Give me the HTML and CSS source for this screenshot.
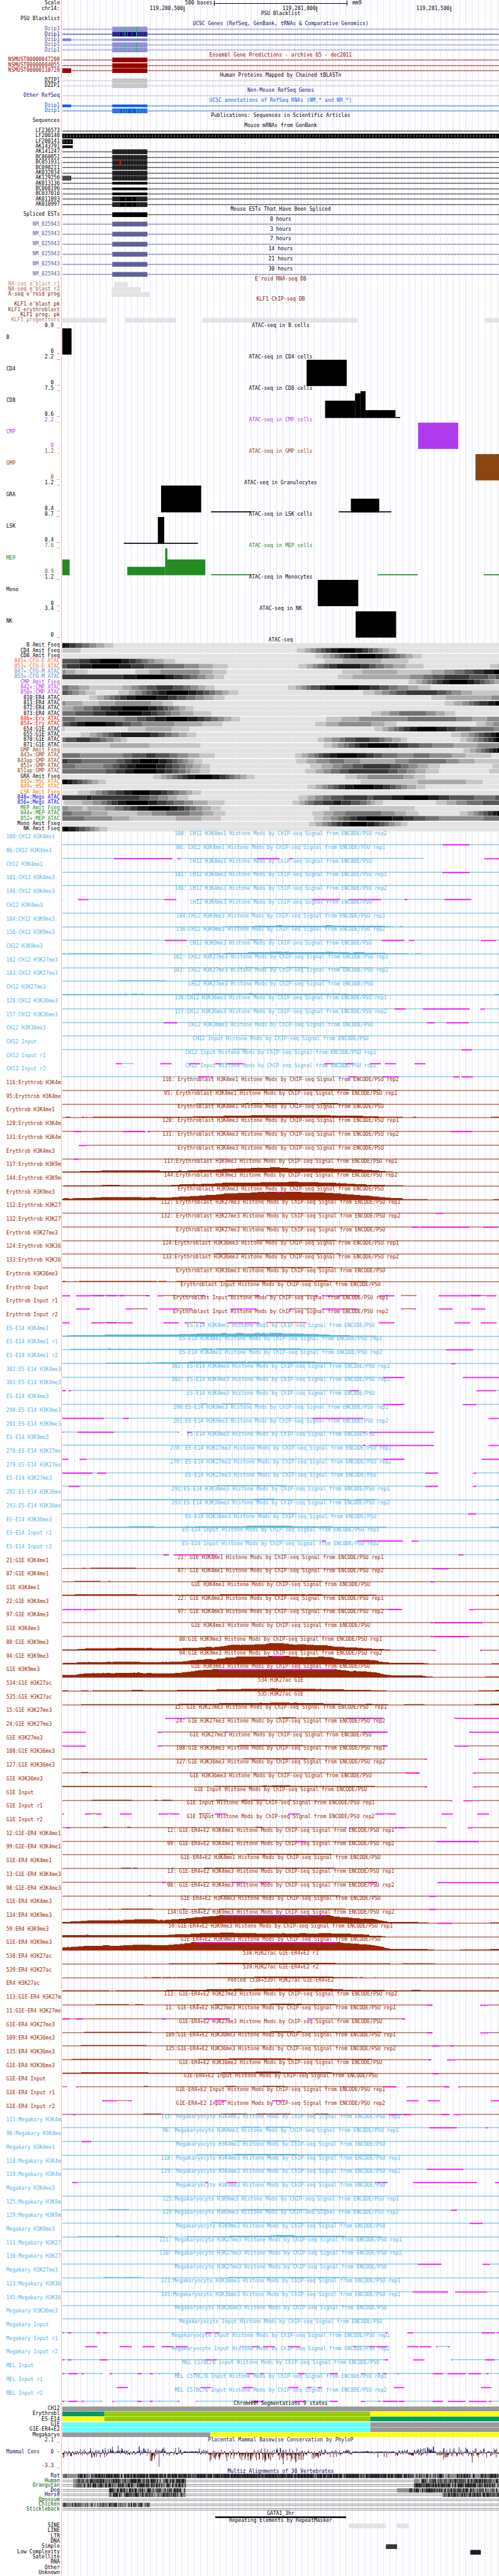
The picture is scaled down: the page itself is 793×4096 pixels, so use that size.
FILE: index.html
```html
<!DOCTYPE html>
<html lang="en">
<head>
<meta charset="utf-8">
<title>chr14 - mm9 genome browser tracks</title>
<link rel="stylesheet" href="styles.css">
</head>
<body>
<main class="browser" id="browser">
  <div class="backdrop" id="backdrop"></div>
  <header class="group">
    <div class="row scale">
      <div class="label">Scale</div>
      <div class="scale-data">
        <span class="scale-size">500 bases</span>
        <span class="scale-bar"></span>
        <span class="scale-db">mm9</span>
      </div>
    </div>
    <div class="row item">
      <div class="label">chr14:</div>
      <div class="ticks">
        <span class="tick">119,280,500</span>
        <span class="tick">119,281,000</span>
        <span class="tick">119,281,500</span>
      </div>
    </div>
  </header>
</main>
<script src="tracks.js"></script>
</body>
</html>
```
FILE: styles.css
```css
* { box-sizing: border-box; }

body {
  margin: 0;
  background: #fff;
  color: #000;
  font-family: "DejaVu Sans Mono", "Liberation Mono", monospace;
  font-size: 8px;
  line-height: 8px;
}

.browser {
  position: relative;
  display: flex;
  flex-direction: column;
  min-height: 100vh;
  overflow: hidden;
}

.group { display: contents; }

/* Guide lines behind every track */
.backdrop {
  position: absolute;
  inset: 0 0 0 97px;
  border-left: 1px solid #ffb4b4;
  padding-left: 1px;
}
.backdrop svg { display: block; width: 100%; height: 100%; }

/* Rows share the window height in proportion to their kind */
.row {
  position: relative;
  display: grid;
  grid-template-columns: 99px minmax(0, 1fr);
  grid-template-rows: minmax(0, 1fr);
}
.scale { flex: 37 0 0; min-height: 10px; }
.title { flex: 27 0 0; min-height: 7px; }
.align { flex: 27 0 0; min-height: 7px; }
.item { flex: 30 0 0; min-height: 8px; }
.signal { flex: 78 0 0; min-height: 21px; }
.wiggle { flex: 180 0 0; min-height: 50px; }
.bar { flex: 12 0 0; min-height: 3px; }

.label {
  display: flex;
  align-items: center;
  justify-content: flex-end;
  padding: 0 4px 0 10px;
  white-space: pre;
}
.signal .label {
  align-items: flex-start;
  justify-content: flex-start;
  padding: 5px 0 0 10px;
}
.wiggle .label {
  display: grid;
  grid-template-rows: 27fr 43fr 27fr 53fr 27fr 3fr;
  justify-content: stretch;
}
.limit { display: flex; align-items: center; justify-content: flex-end; }
.upper { grid-row: 1; }
.name { grid-row: 3; display: flex; align-items: center; justify-content: space-between; }
.lower { grid-row: 5; }

.data {
  display: grid;
  grid-template: minmax(0, 1fr) / minmax(0, 1fr);
  grid-column: 2;
}
.plot, .caption { grid-area: 1 / 1; }
.plot { display: block; width: 100%; height: 100%; overflow: visible; }
.caption {
  position: relative;
  align-self: start;
  justify-self: center;
  margin: 0;
  font-size: 8px;
  font-weight: 400;
  white-space: pre;
}
.title .caption { align-self: center; }

/* Ruler */
.scale-data {
  display: grid;
  grid-template-columns: 477fr 418fr 476fr;
  align-items: center;
}
.scale-size { text-align: right; padding-right: 3px; }
.scale-bar {
  height: 8px;
  border: solid #000;
  border-width: 0 1px;
  background: linear-gradient(#000, #000) center / 100% 1px no-repeat;
}
.scale-db { padding-left: 8px; }
.ticks {
  display: grid;
  grid-template-columns: 383fr 417fr 420fr 151fr;
}
.tick {
  display: flex;
  align-items: center;
  justify-content: flex-end;
  border-right: 1px solid #000;
  padding-right: 1px;
}
```
FILE: tracks.js
```js
(function () {
  var X0 = 195, X1 = 1566, W = X1 - X0;
  var LABEL_CHARS = 18;
  var browser = document.getElementById('browser');
  var group = browser;

  var BLUE = '#56b4e6', BROWN = '#992600', NAVY = '#0c0c78';
  var SHADES = ['#e3e3e3', '#c6c6c6', '#aaaaaa', '#8d8d8d', '#717171', '#555555', '#383838', '#1c1c1c', '#000000'];

  function rect(x1, x2, y, h, fill) {
    return '<rect x="' + x1 + '" y="' + y + '" width="' + (x2 - x1) + '" height="' + h + '" fill="' + fill + '"/>';
  }
  function plot(h, body) {
    return '<svg class="plot" aria-hidden="true" viewBox="' + X0 + ' 0 ' + W + ' ' + h + '" preserveAspectRatio="none">' + body + '</svg>';
  }
  function nums(s) { return s ? s.split(' ').map(Number) : []; }

  function section() {
    group = document.createElement('section');
    group.className = 'group';
    browser.appendChild(group);
  }
  function addRow(kind, color, label, data) {
    var row = document.createElement('div');
    row.className = 'row ' + kind;
    if (color) row.style.color = color;
    row.innerHTML = (label ? '<div class="label">' + label + '</div>' : '') + '<div class="data">' + data + '</div>';
    group.appendChild(row);
  }
  function caption(text) { return '<h2 class="caption">' + text.replace(/&/g, '&amp;') + '</h2>'; }
  function title(text, color) { section(); addRow('title', color, '', caption(text)); }
  function item(label, color, body) { addRow('item', color, label, body ? plot(30, body) : ''); }

  /* Intron line with direction arrows */
  function chevrons(x1, x2, dir, color, width) {
    var d = '';
    for (var x = x1 + 4; x < x2 - 4; x += 9.89) {
      var a = dir < 0 ? x + 4 : x, b = dir < 0 ? x : x + 4;
      d += 'M' + a.toFixed(1) + ' 9L' + b.toFixed(1) + ' 15.5L' + a.toFixed(1) + ' 22';
    }
    return '<path d="' + d + '" fill="none" stroke="' + color + '" stroke-width="' + width + '"/>';
  }
  function intron(color, light) {
    return rect(X0, X1, 14, 3, color) + chevrons(X0, X1, -1, light || color, light ? 1.6 : 1.3);
  }
  function stripes(x1, x2, base, light, sparse) {
    var s = rect(x1, x2, 2, 27, base), i = 0;
    for (var x = x1 + 2; x < x2 - 2; x += 4.945, i++) {
      if (sparse && x > 378 && x < 426 && i % sparse) continue;
      s += rect(x, x + 1.8, 2, 27, light);
    }
    return s;
  }
  function stops() { return rect(390.5, 393, 2, 27, '#00e61e') + rect(427, 430, 2, 27, '#00e61e'); }

  /* Backdrop guide lines */
  var lines = '';
  for (var k = 0; k < 69; k++) lines += rect(213 + k * 19.81, 214.65 + k * 19.81, 0, 10, '#dcdcfa');
  document.getElementById('backdrop').innerHTML = plot(10, lines);

  title('PSU Blacklist');
  item('PSU Blacklist', '', '');

  var VIOLET = '#8282d2', PALE = '#aaaae1', SOFT = '#a5a5d2';
  title('UCSC Genes (RefSeq, GenBank, tRNAs & Comparative Genomics)', NAVY);
  item('Dzip1', '#505096', intron(VIOLET, SOFT) + stripes(352, 462, VIOLET, PALE) + stops());
  item('Dzip1', NAVY, intron(NAVY, '#7878b4') + stripes(352, 462, NAVY, '#5f5fa5', 3) + stops());
  item('Dzip1', '#505096', intron(VIOLET, SOFT) + rect(195, 223, 8, 15, VIOLET) + rect(352, 462, 8, 15, VIOLET));
  item('Dzip1', '#505096', intron(VIOLET, SOFT) + stripes(352, 462, VIOLET, PALE) + stops());
  item('Dzip1', '#505096', intron(VIOLET, SOFT) + stripes(352, 462, VIOLET, PALE) + stops());

  var RED = '#960000', block = function (c) { return rect(352, 462, 2, 27, c); };
  title('Ensembl Gene Predictions - archive 65 - dec2011', RED);
  item('NSMUST00000047208', RED, intron(RED, '#c88282') + block(RED));
  item('NSMUST00000004055', RED, intron(RED, '#c88282') + block(RED));
  item('NSMUST00000110728', RED, intron(RED, '#c88282') + rect(195, 223, 2, 27, RED) + block(RED));

  title('Human Proteins Mapped by Chained tBLASTn');
  item('DZIP1', '', intron('#c6c6c6', '#c6c6c6') + block('#c6c6c6'));
  item('DZIP1', '', intron('#c6c6c6', '#c6c6c6') + block('#c6c6c6'));

  title('Non-Mouse RefSeq Genes', NAVY);
  item('Other RefSeq', NAVY, rect(X0, X1, 14, 3, '#aaaad2'));

  var AZURE = '#0c5ceb';
  title('UCSC annotations of RefSeq RNAs (NM_* and NR_*)', AZURE);
  item('Dzip1', AZURE, intron(AZURE, '#8cb4f5') + rect(195, 223, 8, 15, AZURE) + rect(352, 462, 8, 15, AZURE));
  item('Dzip1', AZURE, intron(AZURE, '#8cb4f5') + stripes(352, 462, AZURE, '#6496f5', 3) + stops());

  title('Publications: Sequences in Scientific Articles');
  item('Sequences', '', '');

  var GREY = '#969696', black = intron('#000', GREY);
  title('Mouse mRNAs from GenBank');
  item('LF236573', '', black);
  item('LF200140', '', rect(X0, X1, 2, 27, '#000') + chevrons(X0, X1, -1, '#fff', 1.6));
  item('LF200141', '', rect(195, 228, 2, 27, '#000') + chevrons(194, 230, 1, '#fff', 1.6));
  item('AK143791', '', rect(195, 228, 8, 15, '#000'));
  ['AK141247', 'BC060051', 'BC051931', 'BC098211', 'AK032834', 'AK129256'].forEach(function (id) {
    var s = black + stripes(352, 462, '#000', '#5a5a5a');
    if (id === 'BC051931') s += rect(375, 380, 2, 27, '#e60000');
    if (id === 'AK129256') s += stripes(195, 223, '#323232', '#6e6e6e');
    item(id, '', s);
  });
  ['AK013136', 'BC060196', 'BC037016'].forEach(function (id) {
    item(id, '', black + rect(352, 462, 8, 15, '#000'));
  });
  item('AK011093', '', black + stripes(352, 462, '#000', '#5a5a5a', 4));
  item('AK010997', '', black + stripes(352, 462, '#000', '#5a5a5a', 4));

  title('Mouse ESTs That Have Been Spliced');
  item('Spliced ESTs', '', rect(X0, X1, 14, 3, '#000') + block('#000'));

  [0, 3, 7, 14, 21, 30].forEach(function (h) {
    title(h + ' hours', '#000');
    item('NM_025943', '#606098', intron('#606098', '#9696be') + block('#606098'));
  });

  function boxes(s) {
    var n = nums(s), out = '';
    for (var i = 0; i < n.length; i += 2) out += rect(n[i], n[i + 1], 2, 27, '#e3e3e3');
    return out;
  }
  title("E'roid RNA-seq DB", '#781900');
  item("NA-seq e'blast r1", '#be8c7d', boxes('358 401'));
  item("NA-seq e'blast r2", '#a05a46', boxes('350 442'));
  item("A-seq e'roid prog", '#781900', boxes('350 469'));
  title('KLF1 ChIP-seq DB', '#781900');
  item("KLF1 e'blast pk", '#781900', '');
  item('KLF1 erythroblast', '#8c3723', '');
  item('KLF1 prog. pk', '#781900', '');
  item('KLF1 progenitors', '#b47864', boxes('195 335 392 553 635 1121 1520 1566'));

  /* Wiggle tracks: name, colour, caption, upper, lower, "x1 x2 top bottom" quadruples */
  function limits(name, zero, up, low, upColor, lowColor) {
    return '<span class="limit upper"' + (upColor ? ' style="color:' + upColor + '"' : '') + '>' + up + ' _</span>' +
      '<span class="name"><span>' + name + '</span><span>' + zero + '</span></span>' +
      '<span class="limit lower"' + (lowColor ? ' style="color:' + lowColor + '"' : '') + '>' + low + ' _</span>';
  }
  [
    ['B', '#000', 'B cells', '0.9', '0', '195 224 29 179'],
    ['CD4', '#000', 'CD4 cells', '2.2', '0', '962 1088 29 179'],
    ['CD8', '#000', 'CD8 cells', '7.5', '0.6', '1020 1114 83 182 1114 1131 41 182 1131 1147 29 182 1147 1241 137 182 1241 1256 176 182'],
    ['CMP', '#b03aee', 'CMP cells', '2.2', '0', '1312 1438 29 179'],
    ['GMP', '#8b4513', 'GMP cells', '1.2', '0', '1492 1566 29 179'],
    ['GRA', '#000', 'Granulocytes', '1.2', '0.4', '505 631 29 182 662 789 176 182 1063 1228 176 182 1101 1190 104 182'],
    ['LSK', '#000', 'LSK cells', '0.7', '0.4', '388 621 176 182 495 515 29 182'],
    ['MEP', '#228b22', 'MEP cells', '7.6', '0.9', '195 218 92 182 399 518 134 182 518 525 29 182 525 644 92 182 662 789 176 182 1185 1311 176 182 1518 1566 176 182'],
    ['Mono', '#000', 'Monocytes', '1.2', '0', '997 1124 29 179'],
    ['NK', '#000', 'NK', '3.4', '0', '1116 1243 29 179']
  ].forEach(function (t) {
    var n = nums(t[5]), s = '';
    for (var i = 0; i < n.length; i += 4) s += rect(n[i], n[i + 1], n[i + 2], n[i + 3] - n[i + 2], t[1]);
    section();
    addRow('wiggle', t[1], limits(t[0], '', t[3], t[4]), plot(180, s) + caption('ATAC-seq in ' + t[2]));
  });

  /* Density rows: shade, end, shade, end ... */
  var TOMATO = '#ff6347', STEEL = '#4a90d0', PURPLE = '#b03aee', UMBER = '#8b4513', ORANGE = '#ee7600', GREEN = '#228b22';
  title('ATAC-seq');
  [
    ['B Amit Fseq', '', '8 203 7 218 6 238 5 259 4 281 3 302 2 327 1 355 0'],
    ['CD4 Amit Fseq', '', '1 253 0 931 1 956 2 974 3 990 4 1006 5 1020 6 1037 7 1060 8 1116 7 1139 6 1156 5 1172 4 1187 3 1202 2 1221 1 1244 0'],
    ['CD8 Amit Fseq', '', '0 989 1 1013 2 1035 3 1050 4 1065 5 1080 6 1098 7 1121 8 1180 7 1202 6 1222 5 1240 4 1256 3 1274 2 1296 1 1324 0'],
    ['845+:CFU-E ATAC', TOMATO, '5 248 6 282 7 312 8 381 7 405 6 426 5 444 4 464 3 485 2 513 1 550 0 1018 1 1076 2 1197 1 1282 0'],
    ['853+:CFU-E ATAC', TOMATO, '5 208 6 249 7 287 8 373 7 411 6 452 5 513 4 579 3 624 2 668 1 716 0 936 1 961 2 980 3 997 4 1015 5 1032 6 1055 7 1132 6 1160 5 1180 4 1205 3 1235 2 1274 1 1330 0 1538 1 1563 2'],
    ['847+:CFU-M ATAC', STEEL, '3 205 2 236 1 274 0 424 1 467 2 503 3 627 2 667 1 711 0 1073 1 1136 2 1246 1 1353 2 1393 3 1426 4 1457 5 1487 6 1517 7 1550 8'],
    ['855+:CFU-M ATAC', STEEL, '6 386 7 427 8 517 7 546 6 574 5 596 4 620 3 645 2 672 1 703 0 1060 1 1106 2 1287 3 1329 4 1357 5 1393 6 1474 5 1533 4 1555 5'],
    ['CMP Amit Fseq', PURPLE, '0 1282 1 1306 2 1325 3 1341 4 1356 5 1370 6 1388 7 1410 8 1467 7 1490 6 1507 5 1522 4 1538 3 1553 2'],
    ['842+:CMP ATAC', PURPLE, '4 215 3 248 2 281 1 383 2 411 3 436 4 459 5 490 6 543 5 576 4 599 3 622 2 645 1 673 0 903 1 928 2 946 3 961 4 975 5 1002 6 1020 7 1048 8 1127 7 1162 6 1191 5 1221 4 1249 3 1282 2 1314 1 1352 0'],
    ['850+:CMP ATAC', PURPLE, '5 214 4 228 3 248 2 269 1 300 0 371 1 403 2 424 3 443 4 458 5 476 6 497 7 520 8 591 7 617 6 638 5 658 4 676 3 697 2 718 1 748 0 1139 1 1174 2 1198 3 1222 4 1244 5 1274 6 1372 5 1400 4 1419 3 1448 2 1481 1'],
    ['810:ER4 ATAC', '', '0 279 1 304 2 325 3 342 4 358 5 376 6 396 7 423 8 492 7 527 6 555 5 584 4 612 3 640 2 670 1 705 0 1353 1 1400 2 1542 3'],
    ['813:ER4 ATAC', '', '3 206 2 259 1 309 2 361 3 474 2 510 1 543 0 1395 1 1424 2 1451 3 1471 4 1486 5 1503 6 1532 7 1553 8'],
    ['872:ER4 ATAC', '', '2 229 3 261 4 289 5 315 6 347 7 383 8 467 7 492 6 514 5 528 4 545 3 563 2 583 1 607 0'],
    ['873:ER4 ATAC', '', '4 236 5 292 6 330 7 368 8 447 7 474 6 495 5 517 4 538 3 566 2 606 1 664 0 1165 1 1195 2 1221 3 1251 4 1337 3 1368 2 1396 1 1429 0'],
    ['846+:Ery ATAC', '#f00', '4 236 3 391 4 429 5 457 6 485 7 520 8 589 7 621 6 643 5 664 4 683 3 704 2 726 1 753 0 1023 1 1071 2 1126 3 1278 4 1433 3 1481 2 1528 3 1563 4'],
    ['854+:Ery ATAC', '#f00', '4 201 5 219 6 240 7 266 8 333 7 361 6 386 5 411 4 447 3 548 2 635 1 698 0 989 1 1023 2 1061 3 1165 2 1207 1 1244 0 1494 1 1523 2 1547 3'],
    ['654:G1E ATAC', '', '1 203 0 401 1 456 2 540 1 594 0 1175 1 1200 2 1218 3 1236 4 1251 5 1265 6 1284 7 1307 8 1372 7 1403 6 1431 5 1477 4 1550 3'],
    ['655:G1E ATAC', '', '0 253 1 281 2 302 3 320 4 338 5 357 6 378 7 472 6 497 5 518 4 540 3 561 2 586 1 616 0 1415 1 1446 2 1470 3 1488 4 1502 5 1519 6 1540 7 1556 8'],
    ['870:G1E ATAC', '', '4 205 5 238 6 282 5 315 4 333 3 355 2 380 1 399 0 997 1 1017 2 1041 3 1065 4 1081 5 1114 6 1159 5 1192 4 1208 3 1231 2 1258 1 1278 0 1444 1 1464 2 1484 3 1500 4 1516 5 1531 6 1547 7 1558 8'],
    ['871:G1E ATAC', '', '1 345 2 469 1 629 0 1015 1 1041 2 1060 3 1077 4 1093 5 1111 6 1126 7 1152 8 1223 7 1251 6 1281 5 1315 4 1358 3 1424 2 1499 3'],
    ['GMP Amit Fseq', UMBER, '0 1454 1 1474 2 1493 3 1508 4 1521 5 1533 6 1546 7 1559 8'],
    ['843+:GMP ATAC', UMBER, '4 251 3 385 4 414 5 457 6 489 5 531 4 558 3 591 2 626 1 673 0 925 1 947 2 966 3 984 4 998 5 1013 6 1033 7 1056 8 1122 7 1149 6 1174 5 1200 4 1246 3 1296 4 1350 3 1418 2 1461 1 1543 0'],
    ['843ap:GMP ATAC', UMBER, '6 211 5 256 4 365 5 390 6 411 7 437 8 498 7 523 6 541 5 558 4 574 3 591 2 609 1 635 0 929 1 962 2 992 3 1033 4 1081 3 1131 2 1240 3 1282 4 1401 3 1441 2 1490 1'],
    ['851+:GMP ATAC', UMBER, '4 236 3 322 4 353 5 373 6 397 7 426 8 490 7 520 6 541 5 564 4 583 3 604 2 631 1 659 0 972 1 1008 2 1043 3 1074 4 1106 5 1139 6 1226 5 1258 4 1283 3 1312 2 1344 1 1381 0 1545 1'],
    ['851ap:GMP ATAC', UMBER, '4 330 5 363 6 391 7 418 8 492 7 518 6 541 5 561 4 583 3 599 2 627 1 660 0 957 1 990 2 1015 3 1037 4 1065 5 1094 6 1220 5 1249 4 1276 3 1304 2 1335 1 1378 0 1535 1'],
    ['GRA Amit Fseq', '', '0 480 1 505 2 523 3 540 4 555 5 571 6 588 7 611 8 668 7 690 6 709 5 722 4 737 3 754 2 774 1 799 0 1083 1 1119 2 1152 3 1266 2 1299 1 1335 0'],
    ['841+:HSC ATAC', ORANGE, '8 211 7 228 6 244 5 259 4 274 3 289 2 309 1 332 0 1131 1 1311 2 1464 1 1515 0'],
    ['849+:HSC ATAC', ORANGE, '0 964 1 990 2 1010 3 1028 4 1045 5 1061 6 1081 7 1109 8 1174 7 1203 6 1225 5 1243 4 1261 3 1278 2 1306 1 1335 0'],
    ['LSK Amit Fseq', ORANGE, '0 243 1 281 2 300 3 319 4 337 5 363 6 388 7 414 8 470 7 505 6 526 5 546 4 562 3 584 2 602 1 631 0'],
    ['848+:Megs ATAC', '#0000e6', '6 271 7 287 6 436 5 470 4 498 3 527 2 555 1 591 0 936 1 964 2 989 3 1013 4 1038 5 1078 6 1154 5 1170 6 1230 7 1266 8 1345 7 1378 6 1411 5 1490 4 1553 5'],
    ['856+:Megs ATAC', '#0000e6', '0 200 1 257 2 289 3 317 4 335 5 348 6 368 7 393 8 465 7 494 6 521 5 545 4 578 3 607 2 652 1 705 0 918 1 939 2 955 3 966 4 985 5 1013 6 1046 7 1071 6 1103 5 1131 4 1152 3 1164 2 1178 1 1202 0 1368 1 1401 2 1431 3 1465 4 1514 5'],
    ['MEP Amit Fseq', GREEN, '3 213 2 259 1 274 2 328 3 358 4 385 5 408 6 432 7 464 8 533 7 558 6 579 5 597 4 615 3 635 2 662 1 693 0 1033 1 1302 0'],
    ['844+:MEP ATAC', GREEN, '4 226 3 286 2 338 1 429 2 475 3 520 4 594 3 637 2 670 1 708 0 980 1 1015 2 1046 3 1084 4 1197 3 1238 2 1274 1 1314 0 1443 1 1467 2 1487 3 1501 4 1516 5 1530 6 1545 7 1559 8'],
    ['852+:MEP ATAC', GREEN, '4 264 3 352 2 406 1 551 2 632 1 693 0 985 1 1013 2 1038 3 1060 4 1078 5 1098 6 1119 7 1149 8 1231 7 1266 6 1299 5 1335 4 1378 3 1517 4'],
    ['Mono Amit Fseq', '', '0 969 1 990 2 1010 3 1027 4 1040 5 1056 6 1073 7 1096 8 1152 7 1175 6 1192 5 1208 4 1221 3 1238 2 1258 1 1279 0'],
    ['NK Amit Fseq', '', '8 216 7 238 6 249 5 266 4 282 3 299 2 312 1 337 0']
  ].forEach(function (t) {
    var n = nums(t[2]), s = '', x = X0;
    for (var i = 0; i < n.length; i += 2) {
      var end = n[i + 1] || X1;
      s += rect(x, end, 2, 27, SHADES[n[i]]);
      x = end;
    }
    item(t[0], t[1], s);
  });

  /* Signal tracks: label, caption, step profile "x height ...", clipped-low marks, clipped-high marks */
  var MODS = ' Histone Mods by ChIP-seq Signal from ENCODE/PSU';
  function signals(color, list) {
    list.forEach(function (t) {
      var n = nums(t[2]), d = '', x = X0, h = 3, i;
      var step = function (end) {
        if (h && end > x) d += 'M' + x + ' 77V' + (77 - h) + 'H' + end + 'V77Z';
      };
      for (i = 0; i < n.length; i += 2) { step(n[i]); x = n[i]; h = n[i + 1]; }
      step(X1);
      var s = '<path d="' + d + '" fill="' + color + '"/>';
      n = nums(t[3]);
      for (i = 0; i < n.length; i += 2) s += rect(n[i], n[i + 1], 74, 6, '#f0f');
      n = nums(t[4]);
      for (i = 0; i < n.length; i += 2) s += rect(n[i], n[i + 1], 29, 6, '#f0f');
      section();
      addRow('signal', color, t[0].slice(0, LABEL_CHARS), plot(78, s) + caption(t[1].replace('~', MODS)));
    });
  }

  signals(BLUE, [
    ['100:CH12 H3K4me1', '100: CH12 H3K4me1~ rep2', '', '1388 1474'],
    ['86:CH12 H3K4me1', '86: CH12 H3K4me1~ rep1', '540 0 566 3 878 0 918 3 1330 0', '357 540 556 566 807 878 908 918 1520 1566'],
    ['CH12 H3K4me1', 'CH12 H3K4me1~', '', '1388 1474'],
    ['101:CH12 H3K4me3', '101: CH12 H3K4me3~ rep1', ''],
    ['146:CH12 H3K4me3', '146: CH12 H3K4me3~ rep2', '198 0 277 3 515 0 622 3 1068 0 1093 3 1479 0', '244 277 515 553 617 622 979 1068 1093 1195 1269 1278 1396 1479'],
    ['CH12 H3K4me3', 'CH12 H3K4me3~', ''],
    ['104:CH12 H3K9me3', '104:CH12 H3K9me3~ rep1', '705 6 799 9 867 12 885 9 1022 12 1043 9 1207 6 1228 3 1230 6 1235 3 1253 6 1266 3'],
    ['156:CH12 H3K9me3', '156:CH12 H3K9me3~ rep2', '777 6 824 3 848 6 858 3 1269 0 1301 3 1502 0 1556 3', '517 586 1198 1269 1282 1301 1502 1504 1509 1556'],
    ['CH12 H3K9me3', 'CH12 H3K9me3~', '195 6 205 3 213 6 368 3 371 6 475 3 657 6 705 9 777 12 847 15 885 12 891 15 906 12 1022 15 1043 12 1096 9 1108 12 1144 9 1210 6 1282 3 1291 6 1294 3 1301 6 1324 3'],
    ['102:CH12 H3K27me3', '102: CH12 H3K27me3~ rep1', '678 6 683 3 748 6 753 3 756 6 761 3 769 6 797 3 801 6 804 3 824 6 833 3 835 6 876 3 896 6 967 3 1066 6 1094 3'],
    ['103:CH12 H3K27me3', '103: CH12 H3K27me3~ rep2', '370 6 522 3 602 6 1035 3 1050 6 1053 3'],
    ['CH12 H3K27me3', 'CH12 H3K27me3~', '195 6 375 9 378 6 390 9 398 6 413 9 431 6 442 9 451 6 602 9 782 12 792 9 1038 6 1040 9 1071 6 1075 9 1091 6 1203 3 1553 6'],
    ['126:CH12 H3K36me3', '126:CH12 H3K36me3~ rep1', '1474 0 1522 3', '1238 1273 1327 1474 1507 1522'],
    ['157:CH12 H3K36me3', '157:CH12 H3K36me3~ rep2', '', '513 556 1340 1365 1400 1471'],
    ['CH12 H3K36me3', 'CH12 H3K36me3~', ''],
    ['CH12 Input', 'CH12 Input~', '718 6 720 3 730 6 776 3', '1448 1481'],
    ['CH12 Input r1', 'CH12 Input~ rep1', '195 0 381 3 416 0 693 3 710 0 1045 3 1083 0', '363 381 416 418 503 538 593 627 675 693 710 763 1018 1045 1083 1109 1160 1195 1208 1243 1301 1335'],
    ['CH12 Input r2', 'CH12 Input~ rep2', '1443 0 1448 3', '533 535 622 657 660 668 1093 1117 1200 1235 1236 1248 1423 1443 1448 1484']
  ]);

  signals(BROWN, [
    ['116:Erythrob H3K4me1', '116: Erythroblast H3K4me1~ rep2', '558 6 560 3 589 6 593 3 596 6 744 9 748 6 751 9 1096 6 1195 3'],
    ['95:Erythrob H3K4me1', '95: Erythroblast H3K4me1~ rep1', '614 6 761 9 764 6 769 9 781 6 789 9 820 6 822 9 825 6 829 9 921 6 923 9 933 6 982 9 985 6 1000 9 1002 6 1007 9 1061 6 1197 3'],
    ['Erythrob H3K4me1', 'Erythroblast H3K4me1~', '205 6 221 3 256 6 264 3 269 6 272 3 290 6 606 9 701 12 787 15 1037 12 1045 15 1047 12 1051 15 1053 12 1139 9 1188 6 1264 3 1296 6 1306 3 1540 6 1547 3 1548 6'],
    ['120:Erythrob H3K4me3', '120: Erythroblast H3K4me3~ rep1', '456 0 462 3', '231 254 386 456 462 469 1416 1454 1456 1481'],
    ['131:Erythrob H3K4me3', '131: Erythroblast H3K4me3~ rep2', '195 0 272 3', '246 272'],
    ['Erythrob H3K4me3', 'Erythroblast H3K4me3~', '', '231 246'],
    ['117:Erythrob H3K9me3', '117:Erythroblast H3K9me3~ rep1', '195 6 251 9 315 12 317 9 320 12 502 9 561 12 569 9 588 12 622 15 677 18 698 21 741 24 787 27 810 30 812 27 847 30 878 27 904 24 1047 21 1103 18 1136 15 1167 12 1190 9 1210 6 1233 3'],
    ['144:Erythrob H3K9me3', '144:Erythroblast H3K9me3~ rep2', '200 6 319 9 330 6 332 9 375 6 536 9 563 12 605 15 611 12 631 15 675 18 697 21 817 24 904 27 937 24 1000 21 1055 18 1063 21 1066 18 1088 15 1115 12 1149 9 1208 6 1266 3'],
    ['Erythrob H3K9me3', 'Erythroblast H3K9me3~', '195 9 200 12 215 9 228 12 289 15 292 12 294 15 315 18 442 15 451 18 453 15 467 18 490 15 538 18 561 21 596 24 624 27 645 30 677 33 692 36 703 39 746 42 787 45 810 48 819 45 821 48 830 45 834 48 946 45 1020 42 1045 39 1070 36 1088 33 1111 30 1131 27 1160 24 1170 21 1190 18 1208 15 1226 12 1264 6 1342 3 1547 6', '', '868 878 885 893'],
    ['112:Erythrob H3K27me3', '112: Erythroblast H3K27me3~ rep1', '', '1367 1390'],
    ['132:Erythrob H3K27me3', '132: Erythroblast H3K27me3~ rep2', '', '1292 1314 1319 1472 1517 1562'],
    ['Erythrob H3K27me3', 'Erythroblast H3K27me3~', '797 6 799 3 804 6 1055 3'],
    ['124:Erythrob H3K36me3', '124:Erythroblast H3K36me3~ rep1', '672 6 677 3 678 6 1045 3 1056 6 1065 3'],
    ['133:Erythrob H3K36me3', '133:Erythroblast H3K36me3~ rep2', '736 6 739 3 777 6 980 3 995 6 1045 3'],
    ['Erythrob H3K36me3', 'Erythroblast H3K36me3~', '195 6 205 3 236 6 239 3 248 6 492 3 497 6 522 3 553 6 708 9 982 6 989 9 1028 6 1154 3'],
    ['Erythrob Input', 'Erythroblast Input~', '195 0 285 3 469 0 512 3 644 0 715 3 815 0 835 3 997 0 1050 3 1101 0 1258 3 1307 0 1474 3 1525 0', '195 220 238 286 289 325 335 366 375 390 457 469 494 512 629 644 715 723 805 815 835 837 989 997 1012 1050 1061 1078 1101 1127 1188 1238 1377 1474 1477 1509 1525 1558'],
    ['Erythrob Input r1', 'Erythroblast Input~ rep1', '195 0 413 3 457 0 560 3 588 0 761 3 767 0 926 3 989 0 1078 3 1099 0 1263 3 1301 0', '238 282 394 413 457 462 498 560 588 604 723 761 767 804 908 926 989 992 1012 1078 1099 1122 1258 1263 1301 1306 1377 1421 1479 1523'],
    ['Erythrob Input r2', 'Erythroblast Input~ rep2', '195 0 325 3 373 0 593 3 629 0 837 3 956 0', '195 218 286 325 335 366 373 416 512 561 579 593 629 642 715 764 766 814 835 837 956 962 1188 1238 1426 1476 1509 1558']
  ]);

  signals(BLUE, [
    ['ES-E14 H3K4me1', 'ES-E14 H3K4me1~', '195 6 210 9 218 6 221 9 328 12 561 15 607 18 609 15 616 18 695 21 711 18 741 21 763 18 799 21 815 18 819 21 820 18 823 21 832 18 845 21 885 18 954 15 1000 12 1037 9 1098 6 1164 3 1166 6 1183 3'],
    ['ES-E14 H3K4me1 r1', 'ES-E14 H3K4me1~ rep1', '221 6 338 9 348 6 373 9 378 6 404 9 408 6 634 9 652 6 657 9 667 6 678 9 942 6 1045 3', '1400 1485'],
    ['ES-E14 H3K4me1 r2', 'ES-E14 H3K4me1~ rep2', '203 6 205 3 332 6 456 9 458 6 464 9 469 6 487 9 500 6 502 9 591 12 771 9 777 12 787 9 789 12 990 9 1041 6 1121 3', '1416 1429'],
    ['302:ES-E14 H3K4me3', '302: ES-E14 H3K4me3~ rep1', '1269 0', '1202 1269 1452 1566'],
    ['303:ES-E14 H3K4me3', '303: ES-E14 H3K4me3~ rep2', '206 0 223 3 1126 0 1556 3', '195 206 215 223 1098 1126 1495 1556'],
    ['ES-E14 H3K4me3', 'ES-E14 H3K4me3~', '629 6 650 3 695 6 787 3 1269 0 1495 3', '1202 1269 1452 1495'],
    ['290:ES-E14 H3K9me3', '290:ES-E14 H3K9me3~ rep1', '1139 0', '195 325 386 403 980 1139 1533 1565'],
    ['291:ES-E14 H3K9me3', '291:ES-E14 H3K9me3~ rep2', '561 0 601 3 1147 0', '195 198 243 357 558 561 586 601 1137 1147 1160 1362'],
    ['ES-E14 H3K9me3', 'ES-E14 H3K9me3~', '1147 0', '1139 1147 1160 1362 1533 1565'],
    ['278:ES-E14 H3K27me3', '278: ES-E14 H3K27me3~ rep1', '195 0 272 3 1269 0', '195 215 249 272 1202 1269 1512 1566'],
    ['279:ES-E14 H3K27me3', '279: ES-E14 H3K27me3~ rep2', '1375 0 1495 3', '195 290 305 333 1335 1375 1484 1495'],
    ['ES-E14 H3K27me3', 'ES-E14 H3K27me3~', '682 6 900 3 916 6 918 3 1375 0 1495 3', '215 249 1335 1375 1484 1495'],
    ['292:ES-E14 H3K36me3', '292:ES-E14 H3K36me3~ rep1', '338 6 797 9 802 6 804 9 863 6 1096 3 1116 6 1178 3 1183 6 1188 3 1556 6'],
    ['293:ES-E14 H3K36me3', '293:ES-E14 H3K36me3~ rep2', '629 6 931 3', '1469 1495'],
    ['ES-E14 H3K36me3', 'ES-E14 H3K36me3~', '277 6 404 9 485 6 581 9 594 6 601 9 603 6 611 9 771 12 916 9 998 6 1002 9 1041 6 1211 3 1537 6'],
    ['ES-E14 Input r1', 'ES-E14 Input~ rep1', '1023 0 1122 3 1264 0 1312 3', '1010 1023 1122 1264 1291 1312'],
    ['ES-E14 Input r2', 'ES-E14 Input~ rep2', '530 0 683 3', '512 530 545 683 1439 1454']
  ]);

  signals(BROWN, [
    ['21:G1E H3K4me1', '21: G1E H3K4me1~ rep1', '259 6 266 3 284 6 426 3', '1357 1408'],
    ['87:G1E H3K4me1', '87: G1E H3K4me1~ rep2', '234 6 314 3 340 6 347 3 617 6 1010 3', '1350 1362'],
    ['G1E H3K4me1', 'G1E H3K4me1~', '195 6 234 9 429 6 541 3 548 6 561 3 566 6 690 9 796 6 797 9 942 6 944 9 959 6 966 9 1010 6 1182 3 1558 6'],
    ['22:G1E H3K4me3', '22: G1E H3K4me3~ rep1', '195 0 304 3 1261 0 1489 3', '195 257 261 304 1218 1261 1472 1489'],
    ['97:G1E H3K4me3', '97: G1E H3K4me3~ rep2', '', '1352 1358 1363 1515'],
    ['G1E H3K4me3', 'G1E H3K4me3~', '', '1352 1358 1363 1472'],
    ['88:G1E H3K9me3', '88:G1E H3K9me3~ rep1', '195 6 243 9 267 12 363 15 454 12 459 15 477 12 571 15 624 18 645 21 664 18 673 21 690 24 703 27 713 30 723 33 753 30 756 33 799 36 834 39 842 42 891 39 906 36 921 33 933 36 959 33 985 30 1028 27 1040 24 1048 21 1081 18 1121 15 1139 12 1167 9 1205 6 1225 3 1367 0 1507 3', '1362 1367 1507 1512'],
    ['94:G1E H3K9me3', '94:G1E H3K9me3~ rep2', '195 6 198 9 241 12 276 15 279 12 333 15 347 12 353 15 439 12 507 15 513 12 518 15 523 12 530 15 573 18 589 21 598 24 617 27 642 30 665 27 680 33 706 39 741 45 842 48 908 45 936 42 951 39 957 42 997 45 1018 42 1040 39 1048 33 1061 30 1085 27 1160 24 1178 21 1188 15 1202 12 1220 9 1330 6 1345 3 1542 6', '', '855 891'],
    ['G1E H3K9me3', 'G1E H3K9me3~', '195 15 239 18 247 21 262 24 290 27 295 24 303 27 305 24 308 27 310 24 320 27 328 24 333 27 347 24 361 27 419 30 422 27 431 30 437 27 447 24 459 27 475 24 548 27 571 30 586 33 598 36 611 39 621 42 637 45 665 48 1056 45 1070 42 1086 39 1096 36 1108 39 1118 36 1150 33 1165 30 1182 27 1193 21 1203 18 1213 15 1225 12 1327 9 1337 6 1358 3 1523 6', '', '685 1050'],
    ['534:G1E H3K27ac', '534:H3K27ac G1E', '195 6 213 3 253 6 277 3 290 6 413 9 449 6 555 9 680 12 756 15 848 18 863 15 866 18 871 15 989 12 1002 15 1007 12 1079 9 1164 6 1213 3 1502 6 1555 9'],
    ['535:G1E H3K27ac', '535:H3K27ac G1E', '254 6 561 9 687 12 814 15 822 12 848 15 908 12 921 15 933 12 1015 9 1070 6 1149 9 1167 6 1218 3 1268 6 1332 3 1489 6 1540 9'],
    ['15:G1E H3K27me3', '15: G1E H3K27me3~  rep1', '195 0 583 3 875 6 882 3 885 6 929 3 1203 0', '518 583 1086 1203 1426 1566'],
    ['24:G1E H3K27me3', '24: G1E H3K27me3~ rep2', '195 0 507 3 1216 0', '195 269 494 507 708 715 1137 1216 1472 1566'],
    ['G1E H3K27me3', 'G1E H3K27me3~', '195 0 507 3 749 6 951 3 1216 0 1472 3', '195 269 494 507 1203 1216 1426 1472'],
    ['108:G1E H3K36me3', '108:G1E H3K36me3~ rep1', '763 6 966 3 971 6 974 3 977 6 987 3 1340 0 1522 3', '1332 1340 1502 1522'],
    ['127:G1E H3K36me3', '127:G1E H3K36me3~ rep2', '254 6 276 3 1317 0 1495 3', '1274 1317 1484 1495'],
    ['G1E H3K36me3', 'G1E H3K36me3~', '195 6 477 3 672 6 824 9 838 6 842 9 845 6 852 9 911 6 1177 3 1340 0 1495 3', '1332 1340 1484 1495'],
    ['G1E Input', 'G1E Input~', '287 6 414 3 485 6 495 3 507 6 540 3 678 6 711 3 761 6 777 3 787 6 837 3 845 6 847 3 852 6 860 3 876 6 881 3 906 6 914 3 1418 0 1484 3', '1415 1419 1454 1484'],
    ['G1E Input r1', 'G1E Input~ rep1', '195 0 282 3 302 0 527 3 535 0 624 3 660 0 1207 3 1216 0', '195 201 266 282 302 319 376 413 497 527 535 563 673 711 904 941 1178 1207 1216 1243 1385 1421 1497 1535'],
    ['G1E Input r2', 'G1E Input~ rep2', '324 6 337 3 340 6 342 3 399 6 409 3 801 6 824 3 1088 0 1109 3 1400 0 1484 3', '208 221 1084 1088 1094 1109 1238 1246 1249 1273 1398 1401 1467 1484'],
    ['12:G1E-ER4 H3K4me1', '12: G1E-ER4+E2 H3K4me1~ rep1', '1504 0 1507 3', '933 959 1370 1504 1507 1509'],
    ['99:G1E-ER4 H3K4me1', '99: G1E-ER4+E2 H3K4me1~ rep2', '687 6 731 3 774 6 1041 3'],
    ['G1E-ER4 H3K4me1', 'G1E-ER4+E2 H3K4me1~', '380 6 411 3 416 6 431 3 540 6 545 3 640 6 670 3 672 6 1050 3 1150 6 1154 3'],
    ['13:G1E-ER4 H3K4me3', '13: G1E-ER4+E2 H3K4me3~ rep1', '1183 0', '508 518 728 769 814 847 1147 1183 1372 1566'],
    ['98:G1E-ER4 H3K4me3', '98: G1E-ER4+E2 H3K4me3~ rep2', '465 6 474 3 692 6 1068 3', '1347 1368'],
    ['G1E-ER4 H3K4me3', 'G1E-ER4+E2 H3K4me3~', '343 6 347 3 380 6 480 3 573 6 581 3 622 6 645 3 654 6 662 3 688 6 1083 3', '1347 1368'],
    ['134:ER4 H3K9me3', '134:G1E-ER4+E2 H3K9me3~ rep2', '195 9 221 12 253 15 274 18 371 21 375 18 386 21 421 24 484 21 495 18 502 21 510 18 518 21 538 24 561 27 583 30 601 33 611 36 634 39 655 42 678 45 688 48 1035 45 1043 42 1048 39 1066 36 1093 33 1106 30 1129 27 1144 30 1147 27 1174 24 1182 21 1188 18 1198 15 1205 12 1215 9 1312 6 1345 3 1538 6', '1375 1419', '700 990 992 1023'],
    ['59:ER4 H3K9me3', '59:G1E-ER4+E2 H3K9me3~ rep1', '195 12 269 15 277 12 467 15 470 12 528 15 548 18 598 21 627 24 690 27 733 24 804 21 870 24 873 21 885 24 893 21 939 24 962 21 1000 24 1040 21 1063 21 1101 18 1141 15 1159 9 1197 6 1210 3'],
    ['G1E-ER4 H3K9me3', 'G1E-ER4+E2 H3K9me3~', '195 18 211 21 216 18 221 21 244 24 262 27 322 30 343 27 378 30 381 27 385 30 416 33 475 30 528 33 545 36 565 39 575 36 578 42 599 48 1068 45 1078 42 1101 39 1126 36 1152 33 1165 30 1177 27 1187 24 1195 21 1205 15 1213 12 1223 9 1342 6 1362 3 1444 6 1492 3 1494 6 1538 9', '', '611 1061'],
    ['538:ER4 H3K27ac', '538:H3K27ac G1E-ER4+E2 r1', '530 6 680 9 782 6 786 9 1053 6 1225 3 1261 6 1357 3 1359 6 1365 3'],
    ['539:ER4 H3K27ac', '539:H3K27ac G1E-ER4+E2 r2', '454 6 459 3 475 6 505 3 510 6 517 3 518 6 538 3 543 6 550 3 555 6 797 9 1046 6 1111 3 1114 6 1121 3 1129 6 1139 3 1175 6 1178 3 1532 6 1535 3'],
    ['ER4 H3K27ac', 'Pooled (538+539) H3K27ac G1E-ER4+E2', '195 6 342 3 350 6 353 3 363 6 522 9 647 12 720 15 725 12 734 15 761 12 797 15 876 18 880 15 1045 12 1076 9 1207 6 1291 9 1320 6'],
    ['113:G1E-ER4 H3K27me3', '113: G1E-ER4+E2 H3K27me3~ rep2', '299 6 404 3 424 6 449 3 616 6 626 3 673 6 850 9 923 6 931 9 946 6 1055 3 1357 0 1533 3', '1340 1357 1507 1533'],
    ['11:G1E-ER4 H3K27me3', '11: G1E-ER4+E2 H3K27me3~ rep1', '721 0 979 3 1271 0', '195 218 238 259 508 520 642 721 964 979 1261 1271'],
    ['G1E-ER4 H3K27me3', 'G1E-ER4+E2 H3K27me3~', '264 6 465 3 467 6 475 3 553 6 558 3 594 6 668 3 670 6 850 9 923 6 931 9 946 6 1020 9 1022 6 1197 3 1357 0 1533 3', '1340 1357 1507 1533'],
    ['109:ER4 H3K36me3', '109:G1E-ER4+E2 H3K36me3~ rep1', '253 6 459 3', '1357 1377 1413 1424'],
    ['135:ER4 H3K36me3', '135:G1E-ER4+E2 H3K36me3~ rep2', '224 6 474 3 622 6 718 9 896 6 900 9 913 6 1167 3 1353 0 1429 3', '1345 1353 1403 1429'],
    ['G1E-ER4 H3K36me3', 'G1E-ER4+E2 H3K36me3~', '195 6 254 9 465 6 695 9 802 12 880 9 962 6 967 9 1041 6 1172 3', '1357 1377'],
    ['G1E-ER4 Input', 'G1E-ER4+E2 Input~', '211 0 244 3 451 6 464 3 706 6 741 3 822 6 893 3 992 6 994 3 1020 6 1023 3 1244 0 1279 3 1410 0 1444 3', '238 244 1078 1083 1207 1244 1276 1279 1395 1410 1438 1444'],
    ['G1E-ER4 Input r1', 'G1E-ER4+E2 Input~ rep1', '195 0 366 3 404 0', '320 357 358 366 404 413 673 711 853 893 1276 1314 1342 1381 1540 1566'],
    ['G1E-ER4 Input r2', 'G1E-ER4+E2 Input~ rep2', '449 6 508 3 693 6 756 3 758 6 774 3 805 6 911 3 982 6 984 3 989 6 1030 3 1410 0 1444 3', '224 226 229 238 1220 1259 1264 1289 1385 1410 1423 1444']
  ]);

  signals(BLUE, [
    ['115:Megakary H3K4me1', '115: Megakaryocyte H3K4me1~ rep2', '758 6 789 3 792 6 817 3 834 6 911 3', '1347 1433 1525 1530'],
    ['96:Megakary H3K4me1', '96: Megakaryocyte H3K4me1~ rep1', '731 6 901 3 903 6 904 3 909 6 939 3', '256 286 1469 1471'],
    ['Megakary H3K4me1', 'Megakaryocyte H3K4me1~', '616 6 734 9 933 6 1187 3'],
    ['118:Megakary H3K4me3', '118: Megakaryocyte H3K4me3~ rep1', '', '1339 1454'],
    ['119:Megakary H3K4me3', '119: Megakaryocyte H3K4me3~ rep2', '195 0 244 3 654 0 744 3 1216 0', '226 244 645 654 711 744 1177 1216 1296 1497 1553 1566'],
    ['Megakary H3K4me3', 'Megakaryocyte H3K4me3~', ''],
    ['125:Megakary H3K9me3', '125:Megakaryocyte H3K9me3~ rep1', '338 6 406 3 758 6 964 3 980 6 999 3 1000 6 1022 3 1025 6 1028 3', '1416 1434'],
    ['129:Megakary H3K9me3', '129:Megakaryocyte H3K9me3~ rep2', '662 6 1086 3', '1474 1515'],
    ['Megakary H3K9me3', 'Megakaryocyte H3K9me3~', '244 6 363 9 375 6 518 3 530 6 538 3 586 6 720 9 850 12 853 9 857 12 862 9 865 12 923 9 1083 6 1198 3'],
    ['111:Megakary H3K27me3', '111: Megakaryocyte H3K27me3~ rep1', ''],
    ['130:Megakary H3K27me3', '130: Megakaryocyte H3K27me3~ rep2', '916 6 919 3 1385 0 1538 3', '1312 1385 1514 1538'],
    ['Megakary H3K27me3', 'Megakaryocyte H3K27me3~', '325 6 376 3 380 6 432 3 436 6 442 3 716 6 1065 3 1073 6 1088 3'],
    ['123:Megakary H3K36me3', '123:Megakaryocyte H3K36me3~ rep1', '1406 0 1528 3', '1296 1406 1428 1528'],
    ['145:Megakary H3K36me3', '145:Megakaryocyte H3K36me3~ rep2', ''],
    ['Megakary H3K36me3', 'Megakaryocyte H3K36me3~', '759 6 764 3 862 6 865 3'],
    ['Megakary Input', 'Megakaryocyte Input~', '1216 0 1297 3', '195 200 213 223 302 315 322 337 644 665 670 688 1210 1216 1278 1297 1512 1553 1561 1566'],
    ['Megakary Input r1', 'Megakaryocyte Input~ rep1', '195 0 756 3 792 0 1117 3 1160 0 1373 3 1406 0', '267 305 375 413 447 485 507 543 551 589 754 756 792 815 825 862 904 942 1108 1117 1160 1178 1180 1216 1278 1314 1317 1353 1368 1373 1406 1411'],
    ['Megakary Input r2', 'Megakaryocyte Input~ rep2', '1218 0 1416 3', '195 200 213 223 312 337 645 662 665 680 1208 1218 1297 1332 1416 1419 1522 1553'],
    ['MEL Input', 'MEL C57BL/6 Input~', '319 0 352 3 563 0 614 3 1060 0 1145 3', '195 201 215 243 256 262 317 319 343 352 431 444 470 479 500 502 558 563 606 614 774 796 817 827 936 956 1035 1060 1132 1145 1187 1192 1202 1213 1248 1251 1358 1390 1405 1461 1471 1509 1527 1533'],
    ['MEL Input r1', 'MEL C57BL/6 Input~ rep1', '195 0 977 3 997 0', '366 401 629 662 761 794 904 937 964 977 997 1010 1236 1269 1509 1542'],
    ['MEL Input r2', 'MEL C57BL/6 Input~ rep2', '319 0 358 3 563 0 617 3 774 0 827 3 1060 0 1145 3 1390 0 1543 3', '195 201 215 243 256 262 317 319 352 358 431 444 470 479 500 502 558 563 614 617 772 774 796 827 921 956 1035 1060 1132 1145 1187 1192 1202 1248 1251 1269 1358 1390 1405 1461 1471 1527 1533 1543']
  ]);

  /* Segmentation states: colour, end, colour, end ... */
  title('ChromHMM Segmentations 9 states');
  [
    ['CH12', '#999', 1566],
    ['Erythrobl', '#096', 327, '#9c0', 1162, '#ff0', 1566],
    ['ES-E14', '#ff0', 327, '#9c0', 1162, '#096', 1566],
    ['G1E', '#6ff', 1162, '#999', 1566],
    ['G1E-ER4+E2', '#6ff', 1162, '#999', 1566],
    ['Megakaryo', '#999', 660, '#ff0', 1566]
  ].forEach(function (t) {
    var s = '', x = X0;
    for (var i = 1; i < t.length; i += 2) { s += rect(x, t[i + 1], 2, 27, t[i]); x = t[i + 1]; }
    item(t[0], '', s);
  });

  var seed = 7;
  function random() {
    seed = (seed * 1103515245 + 12345) % 2147483648;
    return seed / 2147483648;
  }

  /* Conservation: envelope rows are end, upward reach, downward reach, chance of up */
  var envelope = [
    [240, 8, 26, .5], [340, 24, 26, .5], [390, 36, 6, .8], [430, 20, 10, .7], [470, 34, 14, .8], [500, 20, 44, .4],
    [575, 28, 18, .6], [620, 6, 6, .95], [650, 20, 16, .5], [700, 22, 42, .25], [960, 24, 48, .25], [1010, 26, 30, .4],
    [1065, 14, 24, .5], [1105, 20, 20, .5], [1240, 6, 22, .85], [1310, 16, 16, .6], [1360, 32, 18, .6],
    [1420, 22, 26, .5], [1480, 32, 16, .65], [1566, 26, 30, .5]
  ];
  var peaks = { 476: -48, 498: -81, 658: -51, 786: -48, 830: -54, 888: -66, 926: -54, 1391: -40, 1481: -56, 351: 36, 435: 34, 1440: 32 };
  var up = '', down = '', e = 0;
  for (var x = X0; x < X1; x += 1.65) {
    while (x > envelope[e][0]) e++;
    var r = random();
    var v = Math.pow(random(), 2.2);
    if (r < envelope[e][3]) up += 'M' + x.toFixed(1) + ' 87v-' + (5 + v * envelope[e][1]).toFixed(0) + 'h1.65V87z';
    else down += 'M' + x.toFixed(1) + ' 86v' + (5 + v * envelope[e][2]).toFixed(0) + 'h1.65V86z';
  }
  Object.keys(peaks).forEach(function (p) {
    var h = peaks[p];
    if (h > 0) up += 'M' + p + ' 87v-' + h + 'h1.65V87z';
    else down += 'M' + p + ' 86v' + (-h) + 'h1.65V86z';
  });
  section();
  addRow('wiggle', '#14145a', limits('Mammal Cons', '0 -', '2.1', '-3.3', '', '#5a1414'),
    plot(180, '<path fill="#5a1414" d="' + down + '"/><path fill="#14145a" d="' + up + '"/>') +
    caption('Placental Mammal Basewise Conservation by PhyloP'));

  /* Alignments: g = gap lines, s = solid grey, b = base-by-base (trailing number: share of dark bases) */
  title('Multiz Alignments of 30 Vertebrates', '#00005a');
  [
    ['Rat', '#00005a', 'b 211 .5 s 241 b 285 .6 b 700 .8 b 1060 .93 b 1285 .8 b 1412 .55 s 1434 b 1490 .75 s 1508 b 1566 .7'],
    ['Human', '#005a00', 'g 229 s 241 b 583 .62 g 1299 s 1317 b 1566 .62'],
    ['Orangutan', '#005a00', 'g 229 s 239 b 583 .62 g 1299 b 1566 .65'],
    ['Dog', '#00005a', 'g 342 b 475 .65 b 530 .3 b 583 .6 g 1246 s 1284 b 1480 .66 b 1566 .45'],
    ['Horse', '#00005a', 'g 342 b 475 .65 b 510 .3 b 583 .6 g 1388 s 1393 b 1566 .6'],
    ['Opossum', '#005a00', 'g 1566'],
    ['Chicken', '#005a00', 'b 340 .35 b 470 .5 g 1566'],
    ['Stickleback', '#005a00', 'g 1566']
  ].forEach(function (t) {
    var tokens = t[2].split(' '), s = '', x = X0;
    for (var i = 0; i < tokens.length;) {
      var kind = tokens[i++], end = Number(tokens[i++]);
      if (kind === 'g') s += rect(x, end, 8, 3, '#717171') + rect(x, end, 17, 3, '#717171');
      if (kind === 's') s += rect(x, end, 2, 24, '#8d8d8d');
      if (kind === 'b') {
        var dark = Number(tokens[i++]);
        for (var p = x; p < end; p += 1.65) {
          var shade = random() < dark ? '#000' : SHADES[1 + Math.floor(random() * 5)];
          s += rect(p.toFixed(2), (Math.min(p + 1.75, end)).toFixed(2), 2, 24, shade);
        }
      }
      x = end;
    }
    addRow('align', t[1], t[0], plot(27, s));
  });

  title('GATA1_3hr');
  addRow('bar', '', '', plot(12, rect(675, 1086, 1, 9, '#000')));

  title('Repeating Elements by RepeatMasker');
  item('SINE', '', rect(1094, 1211, 2, 27, '#e3e3e3') + rect(1246, 1282, 2, 27, '#e3e3e3'));
  ['LINE', 'LTR', 'DNA'].forEach(function (n) { item(n, '', ''); });
  item('Simple', '', rect(1211, 1246, 2, 27, '#383838'));
  item('Low Complexity', '', rect(1476, 1509, 2, 27, '#1c1c1c'));
  ['Satellite', 'RNA', 'Other', 'Unknown'].forEach(function (n) { item(n, '', ''); });
})();
```
